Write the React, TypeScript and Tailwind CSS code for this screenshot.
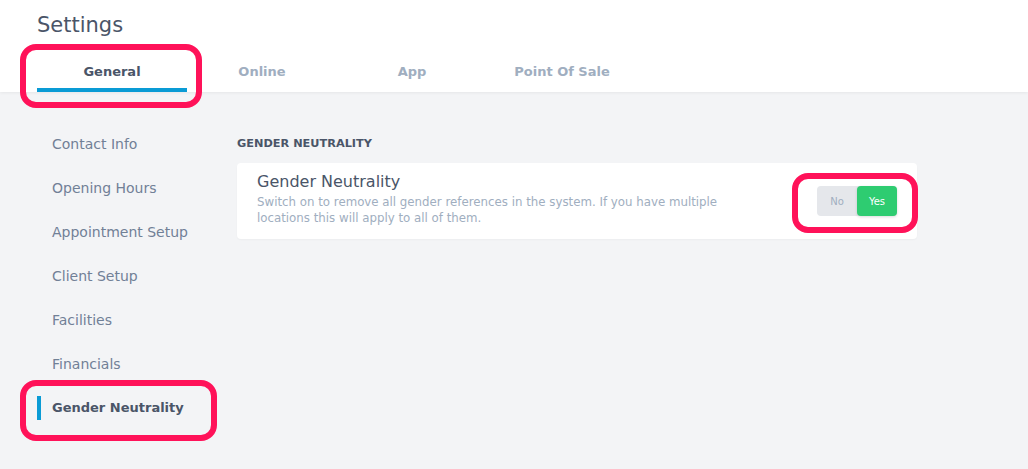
import React from "react";

const font = { fontFamily: '"DejaVu Sans", sans-serif' };

export default function App() {
  const tabs = ["General", "Online", "App", "Point Of Sale"];
  const items = [
    "Contact Info",
    "Opening Hours",
    "Appointment Setup",
    "Client Setup",
    "Facilities",
    "Financials",
    "Gender Neutrality",
  ];
  return (
    <div
      className="relative w-[1028px] h-[469px] overflow-hidden bg-[#f3f4f6] font-['DejaVu_Sans',sans-serif]"
      style={font}
    >
      <header className="h-[92px] bg-white shadow-[0_1px_3px_rgba(0,0,0,0.06)] px-[37px] pt-[10px]">
        <h1 className="text-[21px] leading-[30px] text-[#4a5568]">Settings</h1>
        <nav className="mt-[16px] flex">
          {tabs.map((t, i) => (
            <div
              key={t}
              className={
                i === 0
                  ? "w-[150px] h-[36px] flex items-start justify-center pt-[6px] border-b-4 border-[#0a9bd5] text-[13px] font-bold text-[#4a5568]"
                  : "w-[150px] h-[36px] flex items-start justify-center pt-[6px] text-[13px] font-bold text-[#a0aec0]"
              }
            >
              {t}
            </div>
          ))}
        </nav>
      </header>
      <div className="flex px-[37px] pt-[30px]">
        <aside className="w-[200px] flex flex-col">
          {items.map((it, i) => (
            <div key={it} className="h-[44px] flex items-center">
              {i === items.length - 1 ? (
                <>
                  <span className="w-[4px] h-[24px] bg-[#0a9bd5]" />
                  <span className="ml-[11px] text-[13px] font-bold text-[#4a5568]">{it}</span>
                </>
              ) : (
                <span className="ml-[15px] text-[14px] text-[#718096]">{it}</span>
              )}
            </div>
          ))}
        </aside>
        <main className="w-[680px] pt-[14px]">
          <h2 className="text-[11.3px] leading-[16px] font-bold uppercase text-[#4a5568]">Gender Neutrality</h2>
          <div className="mt-[11px] h-[76px] bg-white rounded-[4px] shadow-[0_1px_2px_rgba(0,0,0,0.03)] flex items-start justify-between pl-[20px] pr-[20px] pt-[9px]">
            <div>
              <div className="text-[16px] leading-[20px] text-[#4a5568]">Gender Neutrality</div>
              <div className="mt-[2px] w-[490px] text-[11.8px] leading-[16px] text-[#a0aec0]">
                Switch on to remove all gender references in the system. If you have multiple locations this will apply to all of them.
              </div>
            </div>
            <div className="mt-[14px] flex h-[30px] w-[80px] rounded-[4px] bg-[#e5e7eb] text-[10px]">
              <div className="w-[40px] flex items-center justify-center text-[#a0aec0]">No</div>
              <div className="w-[40px] flex items-center justify-center rounded-[4px] bg-[#2ecc71] text-white shadow-[0_1px_3px_rgba(0,0,0,0.15)]">
                Yes
              </div>
            </div>
          </div>
        </main>
      </div>
      <div className="absolute left-[20px] top-[44px] w-[182px] h-[64px] rounded-[16px] border-[6px] border-[#ff1259]" />
      <div className="absolute left-[20px] top-[380px] w-[197px] h-[61px] rounded-[16px] border-[6px] border-[#ff1259]" />
      <div className="absolute left-[792px] top-[173px] w-[126px] h-[60px] rounded-[16px] border-[6px] border-[#ff1259]" />
    </div>
  );
}
